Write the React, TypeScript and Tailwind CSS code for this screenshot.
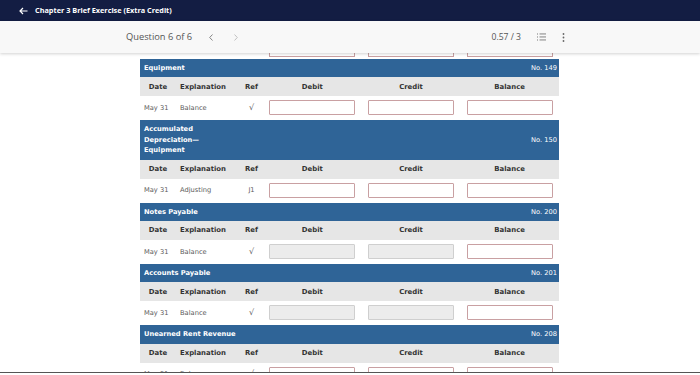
import React from "react";

type Account = {
    title: React.ReactNode;
    no: string;
    explanation: string;
    ref: string;
    locked: boolean;
};

const accounts: Account[] = [
    { title: "Equipment", no: "No. 149", explanation: "Balance", ref: "√", locked: false },
    {
        title: (
            <>
                Accumulated
                <br />
                Depreciation—
                <br />
                Equipment
            </>
        ),
        no: "No. 150",
        explanation: "Adjusting",
        ref: "J1",
        locked: false,
    },
    { title: "Notes Payable", no: "No. 200", explanation: "Balance", ref: "√", locked: true },
    { title: "Accounts Payable", no: "No. 201", explanation: "Balance", ref: "√", locked: true },
    { title: "Unearned Rent Revenue", no: "No. 208", explanation: "Balance", ref: "√", locked: false },
];

const cols = "grid grid-cols-[36px_64px_23px_1fr_1fr_1fr] items-center";

function Field({ locked }: { locked: boolean }) {
    return (
        <div className="flex justify-center">
            <div
                className={`h-[15px] w-[86px] rounded-[1px] border-[1.5px] ${locked
                    ? "border-[#cfcfcf] bg-[#ececec]"
                    : "border-[#c9a0a2] bg-white"
                    }`}
            />
        </div>
    );
}

function DataRow({ a }: { a: Account }) {
    return (
        <div className={`${cols} h-[23px] bg-white text-[6.7px] text-[#5a5a5a]`}>
            <span className="pl-1">May 31</span>
            <span className="pl-1">{a.explanation}</span>
            <span className={`text-center ${a.ref === "√" ? "text-[8px]" : ""}`}>{a.ref}</span>
            <Field locked={a.locked} />
            <Field locked={a.locked} />
            <Field locked={false} />
        </div>
    );
}

function Ledger({ a }: { a: Account }) {
    return (
        <div className="mb-px">
            <div className="flex items-center justify-between bg-[#2f6497] pl-1 pr-[2px] py-[4px] text-[6.7px] leading-[10.4px] text-white">
                <span className="font-bold">{a.title}</span>
                <span>{a.no}</span>
            </div>
            <div className={`${cols} h-[19px] bg-[#e6e6e6] text-[6.9px] font-bold text-[#333]`}>
                <span className="text-center">Date</span>
                <span className="pl-1">Explanation</span>
                <span className="text-center">Ref</span>
                <span className="text-center">Debit</span>
                <span className="text-center">Credit</span>
                <span className="text-center">Balance</span>
            </div>
            <DataRow a={a} />
        </div>
    );
}

export default function App() {
    return (
        <div className="flex h-[375px] w-[700px] flex-col overflow-hidden bg-white font-['Open_Sans',sans-serif]">
            {/* Top: course title */}
            <div className="flex h-[21px] items-center gap-[7px] bg-[#131d43] pl-[19px] text-white">
                <svg width="9" height="8" viewBox="0 0 9 8" fill="none" stroke="white" strokeWidth="1.2">
                    <path d="M8.5 4H1M4 1L1 4l3 3" />
                </svg>
                <span className="text-[7.3px] font-bold">Chapter 3 Brief Exercise (Extra Credit)</span>
            </div>

            {/* Question nav */}
            <div className="relative z-10 flex h-[32px] items-center bg-[#f8f8f8] shadow-[0_1px_3px_rgba(0,0,0,0.18)]">
                <span className="ml-[126px] text-[9.3px] text-[#555]">Question 6 of 6</span>
                <svg className="ml-[17px]" width="4" height="7" viewBox="0 0 4 7" fill="none" stroke="#777" strokeWidth="0.9">
                    <path d="M3.5 0.5L0.7 3.5l2.8 3" />
                </svg>
                <svg className="ml-[21px]" width="4" height="7" viewBox="0 0 4 7" fill="none" stroke="#bbb" strokeWidth="0.9">
                    <path d="M0.5 0.5l2.8 3-2.8 3" />
                </svg>
                <span className="ml-auto text-[8.6px] text-[#555]">0.57 / 3</span>
                <svg className="ml-[16px]" width="9" height="8" viewBox="0 0 9 8" fill="#777">
                    <rect x="0" y="0.5" width="1" height="1" />
                    <rect x="0" y="3.5" width="1" height="1" />
                    <rect x="0" y="6.5" width="1" height="1" />
                    <rect x="2.5" y="0.5" width="6.5" height="0.9" />
                    <rect x="2.5" y="3.5" width="6.5" height="0.9" />
                    <rect x="2.5" y="6.5" width="6.5" height="0.9" />
                </svg>
                <svg className="ml-[16px] mr-[135px]" width="3" height="9" viewBox="0 0 3 9" fill="#666">
                    <circle cx="1.5" cy="1" r="0.9" />
                    <circle cx="1.5" cy="4.5" r="0.9" />
                    <circle cx="1.5" cy="8" r="0.9" />
                </svg>
            </div>

            {/* Ledger accounts */}
            <div className="flex-1 overflow-hidden font-['DejaVu_Sans',Verdana,sans-serif]">
                <div className="ml-[140px] w-[419px]">
                    {/* bottom edge of the previous account's inputs, scrolled off */}
                    <div className={`${cols} h-[6px] items-end pb-[2px]`}>
                        <span />
                        <span />
                        <span />
                        {[0, 1, 2].map((i) => (
                            <div key={i} className="flex justify-center">
                                <div className="h-[4px] w-[86px] border-x-[1.5px] border-b-[1.5px] border-[#c9a0a2]" />
                            </div>
                        ))}
                    </div>
                    {accounts.map((a) => (
                        <Ledger key={a.no} a={a} />
                    ))}
                </div>
            </div>
            <div className="h-[3px] border-t border-[#555] bg-white" />
        </div>
    );
}
